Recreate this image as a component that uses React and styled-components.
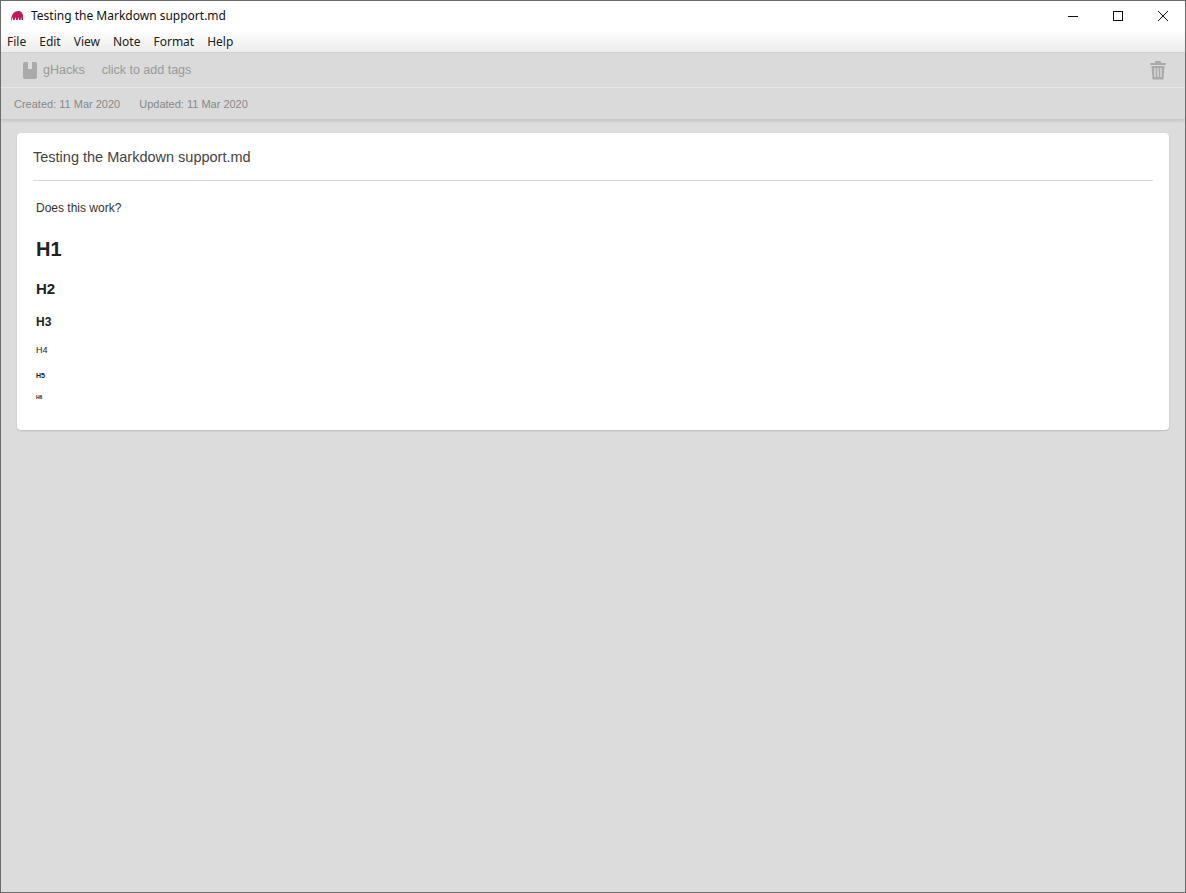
import React from "react";
import styled, { createGlobalStyle } from "styled-components";

const Global = createGlobalStyle`
  html, body { margin: 0; padding: 0; }
  body { font-family: "Liberation Sans", Arial, sans-serif; }
`;

function App() {
  return (
    <Window>
      <Global />
      <TitleBar>
        <AppIcon viewBox="0 0 16 16">
          <path d="M2 13 C2 7 5 3 9 3 C12 3 14 5 14 8 L14 12 L12.5 12 L12.5 9 L11.5 12 L10 12 L10 9 L8.5 12 L7 12 L7 9 L5.5 12 L4 12 L4 9 Z" fill="#c2185b" />
        </AppIcon>
        <Title>Testing the Markdown support.md</Title>
        <WinButtons>
          <WinButton>
            <svg width="12" height="12" viewBox="0 0 12 12"><path d="M1 6.5h10" stroke="#111" /></svg>
          </WinButton>
          <WinButton>
            <svg width="12" height="12" viewBox="0 0 12 12"><rect x="1.5" y="1.5" width="9" height="9" fill="none" stroke="#111" /></svg>
          </WinButton>
          <WinButton>
            <svg width="12" height="12" viewBox="0 0 12 12"><path d="M1 1l10 10M11 1L1 11" stroke="#111" /></svg>
          </WinButton>
        </WinButtons>
      </TitleBar>
      <MenuBar>
        {["File", "Edit", "View", "Note", "Format", "Help"].map((m) => (
          <MenuItem key={m}>{m}</MenuItem>
        ))}
      </MenuBar>
      <Toolbar>
        <Notebook>
          <svg width="14" height="17" viewBox="0 0 14 17">
            <rect x="0" y="0" width="14" height="17" rx="2" fill="#aaa" />
            <rect x="5" y="0" width="4" height="7" fill="#ddd" />
          </svg>
          gHacks
        </Notebook>
        <Tags>click to add tags</Tags>
        <Spacer />
        <svg width="16" height="19" viewBox="0 0 16 19">
          <rect x="0" y="2" width="16" height="2" rx="1" fill="#aaa" />
          <rect x="5" y="0" width="6" height="3" rx="1" fill="#aaa" />
          <path d="M1.5 5h13l-1 13.5h-11z" fill="#aaa" />
          <path d="M5 7v9M8 7v9M11 7v9" stroke="#ddd" strokeWidth="1.3" />
        </svg>
      </Toolbar>
      <MetaRow>
        <span>Created: 11 Mar 2020</span>
        <span>Updated: 11 Mar 2020</span>
      </MetaRow>
      <Content>
        <Card>
          <CardTitle>Testing the Markdown support.md</CardTitle>
          <Body>
            <Para>Does this work?</Para>
            <Heading size={20} gap={24}>H1</Heading>
            <Heading size={15} gap={22}>H2</Heading>
            <Heading size={12} gap={20}>H3</Heading>
            <Heading size={9} gap={18} weight="normal">H4</Heading>
            <Heading size={7} gap={17}>H5</Heading>
            <Heading size={5} gap={16}>H6</Heading>
          </Body>
        </Card>
      </Content>
    </Window>
  );
}

export default App;

const Window = styled.div`
  width: 1186px;
  height: 893px;
  box-sizing: border-box;
  border: 1px solid #6b6b6b;
  background: #dcdcdc;
  display: flex;
  flex-direction: column;
  overflow: hidden;
`;
const TitleBar = styled.div`
  height: 29px;
  background: #fff;
  display: flex;
  align-items: center;
  padding-left: 8px;
`;
const AppIcon = styled.svg`
  width: 16px;
  height: 16px;
`;
const Title = styled.div`
  margin-left: 6px;
  font-family: "Noto Sans", sans-serif;
  font-size: 12px;
  color: #111;
`;
const WinButtons = styled.div`
  margin-left: auto;
  display: flex;
  align-self: stretch;
`;
const WinButton = styled.div`
  width: 45px;
  display: flex;
  align-items: center;
  justify-content: center;
`;
const MenuBar = styled.div`
  height: 22px;
  display: flex;
  align-items: center;
  padding-left: 6px;
  gap: 13px;
  background: linear-gradient(#ffffff, #ececec);
  border-bottom: 1px solid #d0d0d0;
`;
const MenuItem = styled.span`
  font-family: "Noto Sans", sans-serif;
  font-size: 12px;
  color: #222;
`;
const Toolbar = styled.div`
  height: 34px;
  display: flex;
  align-items: center;
  padding: 0 19px 0 22px;
  border-bottom: 1px solid #ececec;
  background: #dadada;
  color: #999;
  font-size: 12.5px;
`;
const Notebook = styled.div`
  display: flex;
  align-items: center;
  gap: 6px;
`;
const Tags = styled.div`
  margin-left: 17px;
`;
const Spacer = styled.div`
  flex: 1;
`;
const MetaRow = styled.div`
  height: 31px;
  display: flex;
  align-items: center;
  gap: 19px;
  padding-left: 13px;
  font-size: 11px;
  color: #888;
  background: #dadada;
  border-bottom: 1px solid #c8c8c8;
  box-shadow: 0 1px 3px rgba(0, 0, 0, 0.12);
`;
const Content = styled.div`
  padding: 13px 16px 0 16px;
`;
const Card = styled.div`
  background: #fff;
  border-radius: 4px;
  box-shadow: 0 1px 2px rgba(0, 0, 0, 0.15);
  padding: 0 16px 30px 16px;
`;
const CardTitle = styled.div`
  height: 47px;
  display: flex;
  align-items: center;
  padding-left: 0;
  font-size: 14.5px;
  color: #444;
  border-bottom: 1px solid #d8d8d8;
`;
const Body = styled.div`
  padding: 20px 3px 0;
  color: #222;
`;
const Para = styled.div`
  font-size: 12px;
  color: #333;
`;
const Heading = styled.div`
  font-size: ${(p) => p.size}px;
  font-weight: ${(p) => p.weight || "bold"};
  margin-top: ${(p) => p.gap}px;
  line-height: 1;
`;
